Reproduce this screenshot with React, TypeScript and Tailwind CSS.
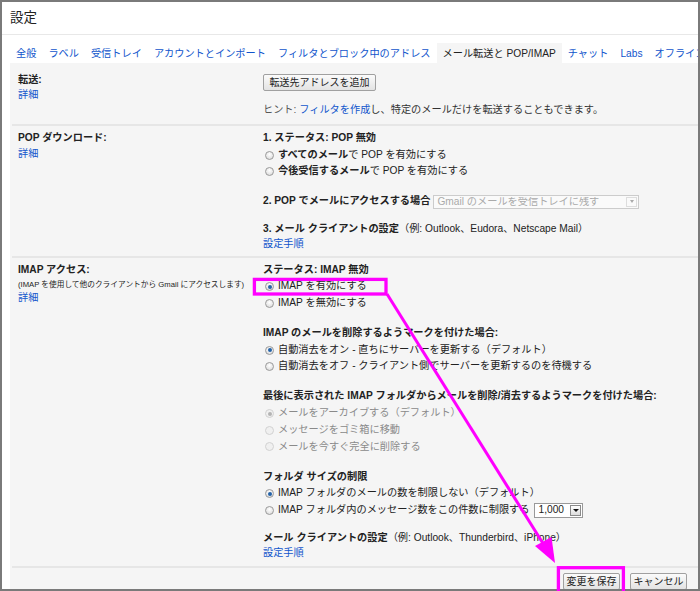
import type { ReactNode } from 'react'

const tabs = [
  '全般',
  'ラベル',
  '受信トレイ',
  'アカウントとインポート',
  'フィルタとブロック中のアドレス',
  'メール転送と POP/IMAP',
  'チャット',
  'Labs',
  'オフライン',
]

function Radio({ checked = false, disabled = false }: { checked?: boolean; disabled?: boolean }) {
  return (
    <span
      className={`ml-[2px] mr-[4px] inline-flex h-[9px] w-[9px] shrink-0 items-center justify-center rounded-full border ${
        disabled
          ? 'border-[#d2d2d2] bg-[#f0f0f0]'
          : 'border-[#9a9a9a] bg-[radial-gradient(circle_at_50%_35%,#ffffff,#d6d6d6)]'
      }`}
    >
      {checked && (
        <span className={`h-[4px] w-[4px] rounded-full ${disabled ? 'bg-[#b4b4b4]' : 'bg-[#2463a8]'}`} />
      )}
    </span>
  )
}

function Option({
  checked,
  disabled,
  children,
}: {
  checked?: boolean
  disabled?: boolean
  children: ReactNode
}) {
  return (
    <div className="flex items-center leading-[16.7px]">
      <Radio checked={checked} disabled={disabled} />
      <span className={disabled ? 'text-[#8a8a8a]' : ''}>{children}</span>
    </div>
  )
}

function Link({ children }: { children: ReactNode }) {
  return <span className="text-[#1155cc]">{children}</span>
}

function Sep() {
  return <div className="ml-[2px] h-[2px] bg-[#e6e6e6]" />
}

function Button({ children, className }: { children: ReactNode; className: string }) {
  return (
    <span
      className={`flex h-[17px] items-center justify-center rounded-[2px] border border-[#a0a0a0] bg-linear-to-b from-[#fbfbfb] to-[#e3e3e3] text-[10px] text-[#222] ${className}`}
    >
      {children}
    </span>
  )
}

export default function App() {
  return (
    <div className="relative h-[591px] w-[700px] font-['Liberation_Sans','Noto_Sans_CJK_JP',sans-serif] text-[10.2px] text-[#222]">
      <div className="flex h-full w-full flex-col overflow-hidden border-2 border-[#7a7a7a] bg-white">
        {/* Title */}
        <div className="flex h-[33px] shrink-0 items-center border-b border-[#e8e8e8] pl-[8px] text-[13.5px] text-[#222]">
          設定
        </div>

        {/* Tabs */}
        <div className="flex h-[28px] shrink-0 items-end overflow-hidden whitespace-nowrap pl-[8px]">
          {tabs.map((t) => (
            <span
              key={t}
              className={`flex h-[20px] items-center px-[6px] pt-[1px] ${
                t === 'メール転送と POP/IMAP' ? 'bg-[#f5f5f5] text-[#222]' : 'text-[#1155cc]'
              }`}
            >
              {t}
            </span>
          ))}
        </div>

        {/* Panel */}
        <div className="ml-[8px] flex flex-1 flex-col bg-[#f5f5f5]">
          {/* Forwarding */}
          <div className="flex pb-[5.65px] pl-[8px] pt-[8.65px]">
            <div className="w-[245px] shrink-0">
              <div className="font-bold leading-[16.7px]">転送:</div>
              <div className="leading-[13.3px]">
                <Link>詳細</Link>
              </div>
            </div>
            <div className="flex-1">
              <Button className="mt-[2.35px] w-[113px]">転送先アドレスを追加</Button>
              <div className="mt-[10.65px] leading-[16.7px] text-[#333]">
                <span className="text-[#555]">ヒント: </span>
                <Link>フィルタを作成</Link>し、特定のメールだけを転送することもできます。
              </div>
            </div>
          </div>
          <Sep />

          {/* POP */}
          <div className="flex pb-[6px] pl-[8px] pt-[4px]">
            <div className="w-[245px] shrink-0">
              <div className="font-bold leading-[16.7px]">POP ダウンロード:</div>
              <div className="leading-[13.3px]">
                <Link>詳細</Link>
              </div>
            </div>
            <div className="flex-1">
              <div className="font-bold leading-[16.7px]">1. ステータス: POP 無効</div>
              <Option>
                <b>すべてのメール</b>で POP を有効にする
              </Option>
              <Option>
                <b>今後受信するメール</b>で POP を有効にする
              </Option>
              <div className="mt-[13.3px] flex items-center leading-[16.7px]">
                <span className="font-bold">2. POP でメールにアクセスする場合</span>
                <span className="ml-[3px] inline-flex h-[14px] w-[206px] items-center border border-[#cccccc] bg-[#fafafa] pl-[3px] text-[#aaaaaa]">
                  <span className="flex-1 truncate leading-none">Gmail のメールを受信トレイに残す</span>
                  <span className="mr-px flex h-[10px] w-[11px] items-center justify-center border border-[#dddddd]">
                    <span className="h-0 w-0 border-x-[2.5px] border-t-[3px] border-x-transparent border-t-[#aaaaaa]" />
                  </span>
                </span>
              </div>
              <div className="mt-[11.3px] leading-[16.7px]">
                <b>3. メール クライアントの設定</b>（例: Outlook、Eudora、Netscape Mail）
              </div>
              <div className="leading-[12px]">
                <Link>設定手順</Link>
              </div>
            </div>
          </div>
          <Sep />

          {/* IMAP */}
          <div className="flex pb-[7px] pl-[8px] pt-[3.6px]">
            <div className="w-[245px] shrink-0">
              <div className="font-bold leading-[16.7px]">IMAP アクセス:</div>
              <div className="text-[7.7px] leading-[13px]">
                (IMAP を使用して他のクライアントから Gmail にアクセスします)
              </div>
              <div className="leading-[14px]">
                <Link>詳細</Link>
              </div>
            </div>
            <div className="flex-1">
              <div className="font-bold leading-[16.7px]">ステータス: IMAP 無効</div>
              <Option checked>IMAP を有効にする</Option>
              <Option>IMAP を無効にする</Option>

              <div className="mt-[13.3px] font-bold leading-[16.7px]">
                IMAP のメールを削除するようマークを付けた場合:
              </div>
              <Option checked>自動消去をオン - 直ちにサーバーを更新する（デフォルト）</Option>
              <Option>自動消去をオフ - クライアント側でサーバーを更新するのを待機する</Option>

              <div className="mt-[13.3px] font-bold leading-[16.7px]">
                最後に表示された IMAP フォルダからメールを削除/消去するようマークを付けた場合:
              </div>
              <Option checked disabled>
                メールをアーカイブする（デフォルト）
              </Option>
              <Option disabled>メッセージをゴミ箱に移動</Option>
              <Option disabled>メールを今すぐ完全に削除する</Option>

              <div className="mt-[13.3px] font-bold leading-[16.7px]">フォルダ サイズの制限</div>
              <Option checked>IMAP フォルダのメールの数を制限しない（デフォルト）</Option>
              <div className="flex items-center leading-[16.7px]">
                <Radio />
                <span>IMAP フォルダ内のメッセージ数をこの件数に制限する</span>
                <span className="ml-[5px] inline-flex h-[15px] w-[49px] items-center border border-[#999999] bg-white pl-[3px]">
                  <span className="flex-1 leading-none">1,000</span>
                  <span className="mr-px flex h-[11px] w-[11px] items-center justify-center border border-[#8a8a8a] bg-linear-to-b from-white to-[#dcdcdc]">
                    <span className="h-0 w-0 border-x-[3px] border-t-[3.5px] border-x-transparent border-t-[#111]" />
                  </span>
                </span>
              </div>

              <div className="mt-[11.3px] leading-[16.7px]">
                <b>メール クライアントの設定</b>（例: Outlook、Thunderbird、iPhone）
              </div>
              <div className="leading-[12px]">
                <Link>設定手順</Link>
              </div>
            </div>
          </div>
          <Sep />

          {/* Actions */}
          <div className="flex justify-end gap-[10px] pr-[11px] pt-[5px]">
            <Button className="h-[16px] w-[57px]">変更を保存</Button>
            <Button className="h-[16px] w-[57px]">キャンセル</Button>
          </div>
        </div>
      </div>

      {/* Annotation overlay */}
      <svg className="pointer-events-none absolute left-0 top-0" width="700" height="591">
        <rect x="254.4" y="279.4" width="131.6" height="14.6" fill="none" stroke="#ff00ff" strokeWidth="3.3" />
        <rect x="558.4" y="567.7" width="65" height="26" fill="none" stroke="#ff00ff" strokeWidth="3.3" />
        <line x1="387" y1="294" x2="544" y2="545" stroke="#ff00ff" strokeWidth="3" />
        <polygon points="555,563 535,546 551.5,537" fill="#ff00ff" />
      </svg>
    </div>
  )
}
